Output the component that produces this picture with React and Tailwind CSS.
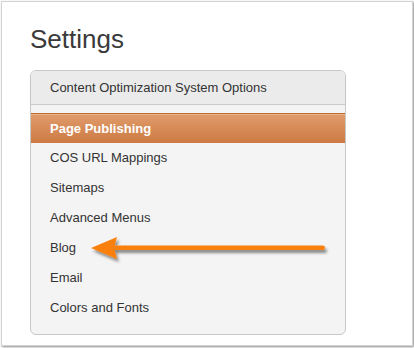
import React from "react";

const items = ["COS URL Mappings", "Sitemaps", "Advanced Menus", "Blog", "Email", "Colors and Fonts"];

export default function App() {
  return (
    <div className="relative w-[414px] h-[348px] bg-white pt-px pl-px font-['Liberation_Sans',Arial,sans-serif] text-[#333]">
      <div className="w-[412px] h-[345px] border border-[#d3d3d3] bg-white shadow-[1px_1px_2px_rgba(0,0,0,0.45)] pl-[28px] pt-[22px]">
        <h1 className="text-[26px] leading-[30px] text-[#3a3a3a]">Settings</h1>
        <div className="mt-[16px] w-[316px] rounded-[6px] border border-[#c8c8c8] bg-[#f4f4f4] overflow-hidden">
          <div className="h-[34px] flex items-center pl-[19px] pt-[1px] bg-[#ebebeb] border-b border-[#c9c9c9] text-[13px]">
            Content Optimization System Options
          </div>
          <div className="pt-[8px] pb-[11px]">
            <div className="h-[30px] flex items-center pl-[19px] border-t border-[#c06a30] shadow-[inset_0_1px_0_rgba(255,255,255,0.25)] bg-gradient-to-b from-[#e09c6b] to-[#cd7a42] text-white font-bold text-[13px]">
              Page Publishing
            </div>
            {items.map((t) => (
              <div key={t} className="h-[30px] flex items-center pl-[19px] text-[13px]">
                {t}
              </div>
            ))}
          </div>
        </div>
      </div>
      <svg className="absolute left-0 top-0 pointer-events-none" width="414" height="348" viewBox="0 0 414 348">
        <defs>
          <filter id="sh" x="-10%" y="-50%" width="120%" height="200%">
            <feDropShadow dx="2" dy="3" stdDeviation="1.4" floodColor="#000" floodOpacity="0.45" />
          </filter>
        </defs>
        <g filter="url(#sh)" fill="#fa800f" stroke="none">
          <polygon points="91,248 117,237 114,248 117,259" />
          <rect x="112" y="245.5" width="213" height="4.5" rx="2.2" />
        </g>
      </svg>
    </div>
  );
}
